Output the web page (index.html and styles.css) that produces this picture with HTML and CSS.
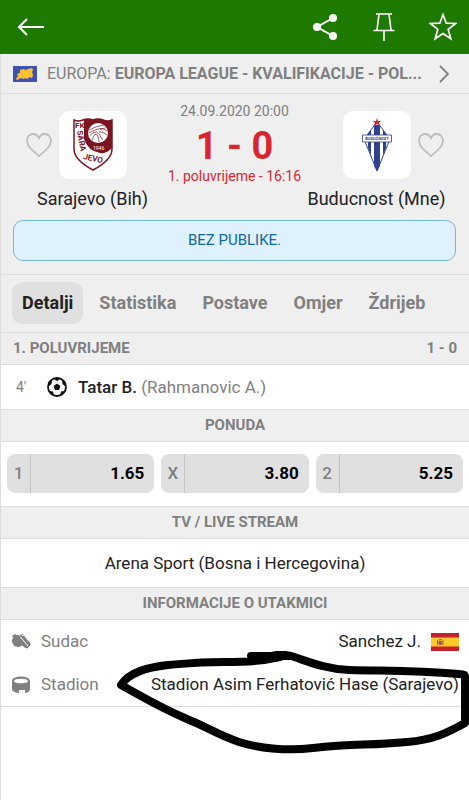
FILE: index.html
```html
<!DOCTYPE html>
<html lang="bs">
<head>
    <meta charset="UTF-8">
    <meta name="viewport" content="width=device-width, initial-scale=1.0">
    <title>Sarajevo - Buducnost</title>
    <link rel="stylesheet" href="styles.css">
</head>
<body>

    <header class="topbar">
        <button class="icon-btn" aria-label="Nazad">
            <svg width="28" height="20" viewBox="0 0 28 20" fill="none" stroke="#fff" stroke-width="2"><path d="M27 10H2M10 2L2 10l8 8"/></svg>
        </button>
        <div class="topbar-actions">
            <button class="icon-btn" aria-label="Podijeli">
                <svg width="28" height="28" viewBox="-2 0 28 28" fill="#fff"><path d="M20 5L4 14l16 9" fill="none" stroke="#fff" stroke-width="2"/><circle cx="20" cy="5" r="4"/><circle cx="4" cy="14" r="4"/><circle cx="20" cy="23" r="4"/></svg>
            </button>
            <button class="icon-btn" aria-label="Zakači">
                <svg width="22" height="28" viewBox="0 0 22 28" fill="none" stroke="#fff" stroke-width="1.6"><path d="M3 1h16M6 1L4 17M16 1l2 16M.5 17.500h21M11 17v11"/></svg>
            </button>
            <button class="icon-btn" aria-label="Dodaj u favorite">
                <svg width="28" height="28" viewBox="0 0 28 28" fill="none" stroke="#fff" stroke-width="1.7"><path d="M14 1.500l3.200 8.700 9.500.3-7.500 5.900 2.600 9.400L14 20.500l-7.800 5.300 2.600-9.400-7.500-5.900 9.500-.3z"/></svg>
            </button>
        </div>
    </header>

    <main class="page">
        <a class="league" href="#">
            <svg class="league-flag" width="24" height="16" viewBox="0 0 24 16"><path fill="#3f51b5" d="M0 0h24v16H0z"/><path fill="#f9c22e" d="M3 13l2-3-1-2 3-1 0-3 3-1 3 1 2-1 4-1 1 2-1 2 1 3-1 3-3-1-1 2-3-1-1 1-3-1-2 1-2 1z"/></svg>
            <span class="league-name">EUROPA: <b>EUROPA LEAGUE - KVALIFIKACIJE - POL...</b></span>
            <svg width="10" height="18" viewBox="0 0 10 18" fill="none" stroke="#808080" stroke-width="1.8"><path d="M1 1l8 8-8 8"/></svg>
        </a>

        <section class="match">
            <div class="teams">
                <div class="team">
                    <button class="heart" aria-label="Prati Sarajevo">
                        <svg width="26" height="24" viewBox="0 0 26 24" fill="none" stroke="#bdbdbd" stroke-width="1.800"><path d="M13 23C6 17 1 13 1 8c0-4 2.500-7 6-7 3 0 5 2 6 4 1-2 3-4 6-4 3.500 0 6 3 6 7 0 5-5 9-12 15z"/></svg>
                    </button>
                    <span class="crest">
                        <svg width="40" height="54" viewBox="0 0 40 54">
                            <path fill="#fff" stroke="#7a1420" stroke-width="1.500" d="M1 2q4 2 9 0 5-2 10 0 5-2 10 0 5 2 9 0v29q0 11-19 21Q1 42 1 31z"/>
                            <path fill="#7a1420" d="M11 2q5-2 9 0 5-2 10 0 5 2 9 0v28q-5 6-12 5-12-2-16-14z"/>
                            <circle cx="25" cy="15" r="10" fill="#fff"/>
                            <path fill="none" stroke="#7a1420" stroke-width=".7" d="M16 12q7-4 15-5M15.500 15q8-5 17-5M16.500 18q4-5 7-4t6 8M19 22q2-6 4-6t3 8M26 14q4-1 8 3M27 11q4-1 7 2"/>
                            <text class="crest-letters" x="2" y="10">FK</text>
                            <text class="crest-letters" transform="translate(4 13) rotate(80)">SARA</text>
                            <text class="crest-letters" transform="translate(10 41) rotate(12)">JEVO</text>
                            <text class="crest-year" x="20" y="32">1946</text>
                        </svg>
                    </span>
                    <span class="team-name">Sarajevo (Bih)</span>
                </div>

                <div class="score">
                    <time class="kickoff">24.09.2020 20:00</time>
                    <strong class="result">1 - 0</strong>
                    <span class="status">1. poluvrijeme - 16:16</span>
                </div>

                <div class="team team-away">
                    <button class="heart" aria-label="Prati Buducnost">
                        <svg width="26" height="24" viewBox="0 0 26 24" fill="none" stroke="#bdbdbd" stroke-width="1.800"><path d="M13 23C6 17 1 13 1 8c0-4 2.500-7 6-7 3 0 5 2 6 4 1-2 3-4 6-4 3.500 0 6 3 6 7 0 5-5 9-12 15z"/></svg>
                    </button>
                    <span class="crest">
                        <svg width="30" height="54" viewBox="0 0 30 54">
                            <path fill="#fff" stroke="#30418e" d="M15 4L2 21l13 32 13-32z"/>
                            <path fill="#30418e" d="M12 7h6v41l-3 5-3-5zM6 16l3-4v25l-3-7zM24 16l-3-4v25l3-7z"/>
                            <path fill="#fff" stroke="#30418e" stroke-width=".8" d="M.5 17h29v7H.5z"/>
                            <text class="crest-club" x="15" y="22">BUDUĆNOST</text>
                            <path fill="#d8262f" d="M15 0l1 3h3l-2 2 1 3-3-2-3 2 1-3-2-2h3z"/>
                        </svg>
                    </span>
                    <span class="team-name">Buducnost (Mne)</span>
                </div>
            </div>
            <p class="notice">BEZ PUBLIKE.</p>
        </section>

        <nav class="tabs">
            <a class="tab active" href="#">Detalji</a>
            <a class="tab" href="#">Statistika</a>
            <a class="tab" href="#">Postave</a>
            <a class="tab" href="#">Omjer</a>
            <a class="tab" href="#">Ždrijeb</a>
        </nav>

        <h2 class="section-title split"><span>1. POLUVRIJEME</span><span>1 - 0</span></h2>
        <div class="event">
            <span class="minute">4'</span>
            <svg width="20" height="20" viewBox="0 0 20 20"><circle cx="10" cy="10" r="9" fill="#fff" stroke="#111" stroke-width="1.800"/><path fill="#111" d="M10 6.500l3.400 2.400-1.300 4H7.900l-1.300-4zM6 1.500h8L10 4zM1 7l1-3 3-1-.5 4L1 10zM19 7l-1-3-3-1 .5 4 3.500 3zM2 14l4 .5L7 19l-3-2zM18 14l-4 .5-1 4.500 3-2z"/></svg>
            <span class="player"><b>Tatar B.</b> (Rahmanovic A.)</span>
        </div>

        <h2 class="section-title">PONUDA</h2>
        <div class="odds">
            <button class="odd"><span class="odd-key">1</span><span class="odd-value">1.65</span></button>
            <button class="odd"><span class="odd-key">X</span><span class="odd-value">3.80</span></button>
            <button class="odd"><span class="odd-key">2</span><span class="odd-value">5.25</span></button>
        </div>

        <h2 class="section-title">TV / LIVE STREAM</h2>
        <p class="tv">Arena Sport (Bosna i Hercegovina)</p>

        <h2 class="section-title">INFORMACIJE O UTAKMICI</h2>
        <dl class="info">
            <div class="info-row">
                <dt>
                    <svg width="20" height="16" viewBox="0 0 20 16"><circle cx="7" cy="7" r="6" fill="#808080"/><path fill="#808080" d="M1 2l3-2 3 2-4 3zM9 1l3-1 7 8 .5 3-3 3.500-3-1L8 8z"/><path fill="none" stroke="#fff" d="M9 2.500L17 12M11 1.500l2-.5 5 6.500"/></svg>
                    Sudac
                </dt>
                <dd>
                    Sanchez J.
                    <svg width="28" height="18" viewBox="0 0 28 18"><path fill="#c8202b" d="M0 0h28v18H0z"/><path fill="#ffc928" d="M0 4.500h28v9H0z"/><path fill="#b5483a" d="M6 7h1v5H6zM11.500 7h1v5h-1zM7.500 8h3.500v3l-1.700 1.300L7.500 11zM8 6h2.500v1.300H8z"/><path fill="#8d6b8e" d="M9 9h1.500v1.500H9z"/></svg>
                </dd>
            </div>
            <div class="info-row">
                <dt>
                    <svg width="20" height="18" viewBox="0 0 20 18"><path fill="#808080" d="M1 5c0-6 18-6 18 0v8q0 3-5 4v-3H8v3q-7-1-7-4z"/><ellipse cx="10" cy="5" rx="7" ry="2.300" fill="#fff"/></svg>
                    Stadion
                </dt>
                <dd>Stadion Asim Ferhatović Hase (Sarajevo)</dd>
            </div>
            <!-- hand-drawn marker around the stadium -->
            <svg class="marker" width="352" height="104" viewBox="117 650 352 104" fill="none" stroke="#000" stroke-width="8" stroke-linecap="round" stroke-linejoin="round">
                <path d="M289 655h-38l1 1h28l-16 3c-14 2-24 2-40 2-30 0-42 2-56 3-18 2-38 6-47 20l18 10c18 10 34 18 48 24 20 8 31 16 52 23 22 7 50 9 74 6 44-5 54-2 94-6 26-2 40-9 58-19v-47q0-2-6-2c-46-4-68-3-110-4-24-1-42-9-58-14q-12-3-22 1"/>
            </svg>
        </dl>
    </main>
</body>
</html>
```
FILE: styles.css
```css
/* Reset default styles */
* {
    margin: 0;
    padding: 0;
    box-sizing: border-box;
}

body {
    font-family: Roboto, "Liberation Sans", sans-serif;
    font-size: 18px;
    line-height: 24px;
    color: #222;
    background-color: #fff;
}

svg {
    display: block;
    flex-shrink: 0;
}

a {
    color: inherit;
    text-decoration: none;
}

button {
    font: inherit;
    border: none;
    background: none;
    cursor: pointer;
}

/* Top bar */
.topbar {
    display: flex;
    justify-content: space-between;
    align-items: center;
    height: 54px;
    padding: 0 12px 0 17px;
    background-color: #1d7900;
}

.topbar-actions {
    display: flex;
    align-items: center;
    gap: 34px;
}

.page {
    min-height: calc(100vh - 54px);
    border-left: 1px solid #ddd;
}

/* League link */
.league {
    display: flex;
    align-items: center;
    height: 40px;
    padding: 0 20px 0 12px;
    color: #808080;
    background-color: #efefef;
    border-bottom: 1px solid #ddd;
    font-size: 16px;
}

.league-name {
    flex: 1;
    min-width: 0;
    margin: 0 12px 0 10px;
    overflow: hidden;
    white-space: nowrap;
}

/* Match header */
.match {
    padding: 6px 13px 13px 12px;
    background-color: #efefef;
    border-bottom: 1px solid #ddd;
}

.teams {
    display: grid;
    grid-template-columns: 1fr 125px 1fr;
    padding-bottom: 9px;
}

.team {
    display: grid;
    grid-template-columns: 1fr 68px 1fr;
    column-gap: 7px;
    align-items: center;
    padding-top: 11px;
}

.heart {
    justify-self: end;
}

.team-away .heart {
    grid-column: 3;
    justify-self: start;
}

.crest {
    display: flex;
    justify-content: center;
    align-items: center;
    grid-column: 2;
    grid-row: 1;
    height: 68px;
    border-radius: 10px;
    background-color: #fff;
}

.team-name {
    grid-column: 1 / -1;
    margin-top: 8px;
    text-align: center;
    white-space: nowrap;
}

.crest-letters {
    font-size: 8px;
    font-weight: bold;
    fill: #7a1420;
}

.crest-year {
    font-size: 5px;
    fill: #fff;
}

.crest-club {
    font-size: 4px;
    font-weight: bold;
    text-anchor: middle;
    fill: #30418e;
}

.score {
    display: flex;
    flex-direction: column;
    align-items: center;
    white-space: nowrap;
    color: #d8262f;
}

.kickoff {
    font-size: 14px;
    line-height: 23px;
    color: #808080;
}

.result {
    font-size: 38px;
    line-height: 46px;
}

.status {
    font-size: 14px;
    line-height: 14px;
}

.notice {
    padding: 7px;
    border: 1px solid #73b9dc;
    border-radius: 10px;
    background-color: #def1fd;
    color: #12699b;
    font-size: 15px;
    line-height: 25px;
    text-align: center;
}

/* Tabs */
.tabs {
    display: flex;
    gap: 6px;
    padding: 7px 11px 8px;
    background-color: #efefef;
    border-bottom: 1px solid #ddd;
}

.tab {
    padding: 9px 10px;
    border-radius: 10px;
    color: #808080;
    font-weight: bold;
}

.tab.active {
    background-color: #e0e0e0;
    color: #222;
}

/* Section titles */
.section-title {
    height: 32px;
    padding: 0 12px;
    background-color: #efefef;
    border-bottom: 1px solid #ddd;
    color: #808080;
    font-size: 15px;
    line-height: 31px;
    text-align: center;
}

.split {
    display: flex;
    justify-content: space-between;
}

/* Goals */
.event {
    display: flex;
    align-items: center;
    padding: 10px 15px;
    border-bottom: 1px solid #ddd;
}

.minute {
    width: 31px;
    color: #808080;
    font-size: 14px;
}

.player {
    margin-left: 11px;
    color: #808080;
    font-size: 17px;
}

.player b {
    color: #222;
    font-weight: 500;
}

/* Odds */
.odds {
    display: grid;
    grid-template-columns: repeat(3, 1fr);
    gap: 7px;
    padding: 12px 6px 13px;
    border-bottom: 1px solid #ddd;
}

.odd {
    display: flex;
    height: 39px;
    border-radius: 8px;
    background-color: #e0e0e0;
    font-size: 17px;
    font-weight: bold;
    line-height: 39px;
}

.odd-key {
    width: 24px;
    border-right: 1px solid #c4c4c4;
    color: #808080;
    font-weight: 500;
    text-align: center;
}

.odd-value {
    flex: 1;
    padding-right: 10px;
    color: #000;
    text-align: right;
}

.tv {
    padding: 12px;
    border-bottom: 1px solid #ddd;
    font-size: 17px;
    text-align: center;
}

/* Match info */
.info {
    position: relative;
    border-bottom: 1px solid #ddd;
    font-size: 17px;
    line-height: 23px;
}

.info-row {
    display: flex;
    justify-content: space-between;
    align-items: center;
    padding: 10px;
}

.info dt,
.info dd {
    display: flex;
    align-items: center;
    gap: 10px;
}

.info dt {
    color: #808080;
}

.marker {
    position: absolute;
    top: 31px;
    right: 0;
    pointer-events: none;
}
```
